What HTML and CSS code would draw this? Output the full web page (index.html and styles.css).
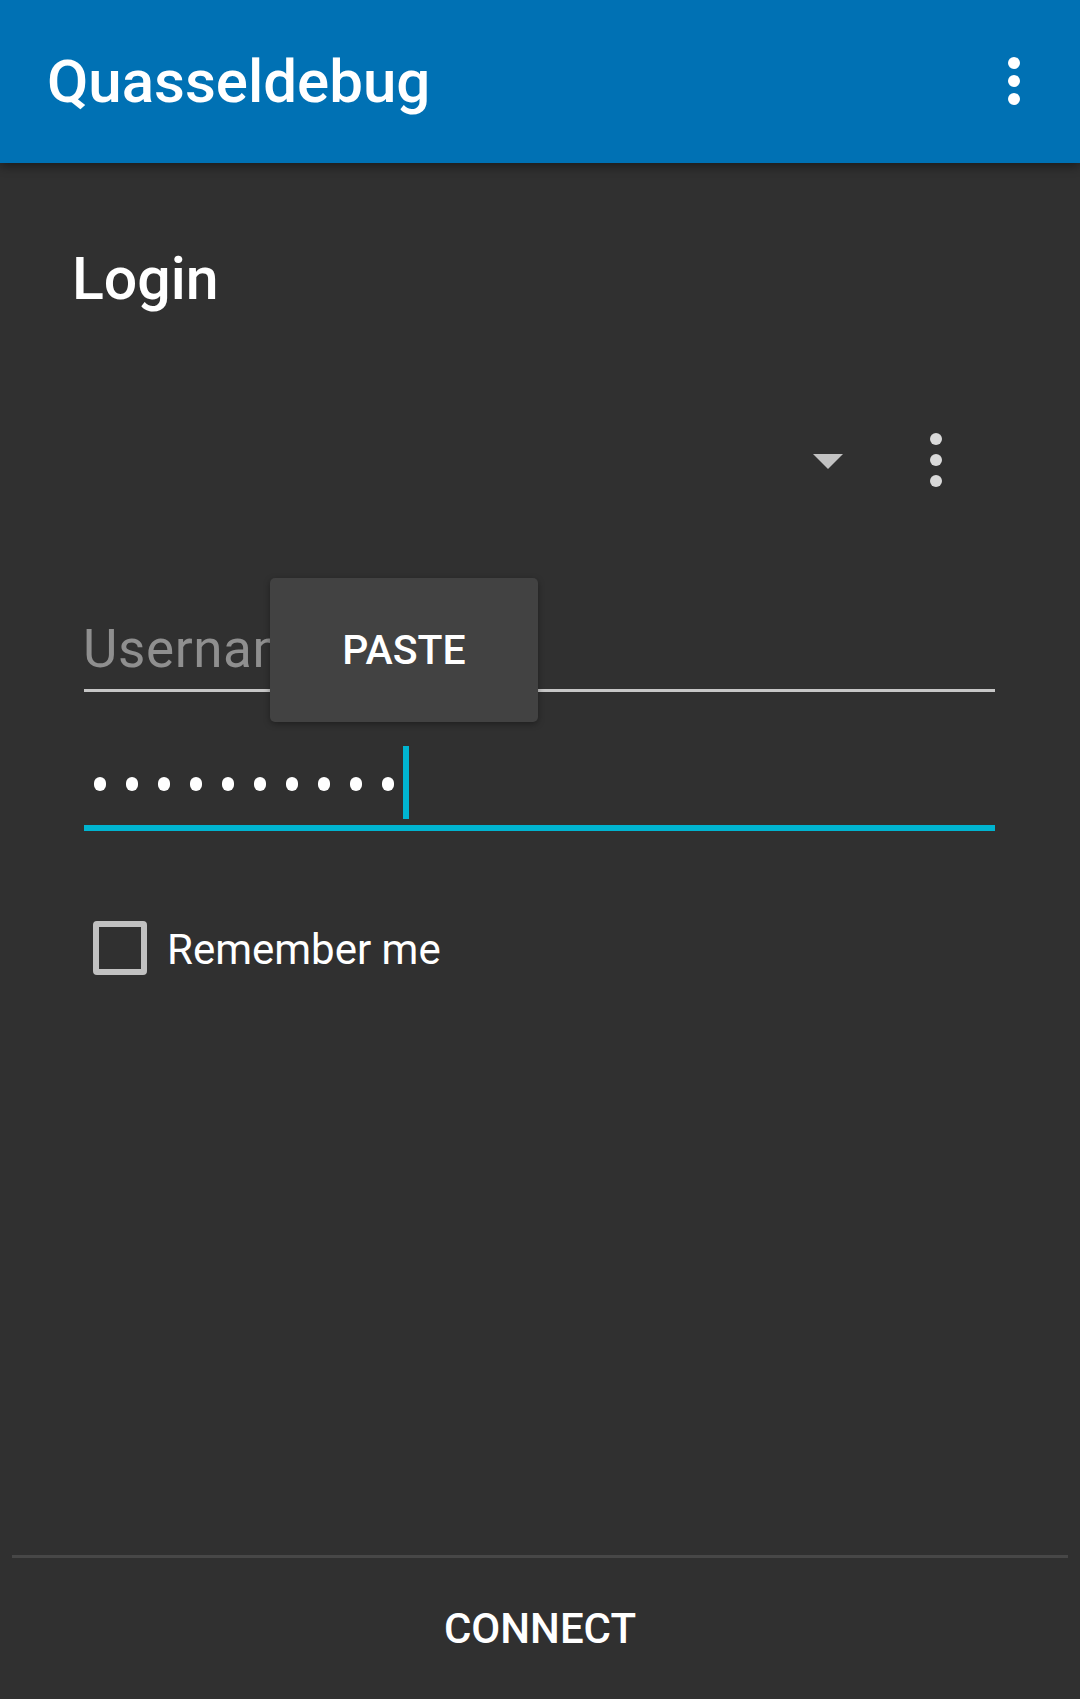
FILE: index.html
```html
<!DOCTYPE html>
<html>
<head>
<meta charset="utf-8">
<link rel="stylesheet" href="styles.css">
</head>
<body>
<div class="app">
  <header class="toolbar">
    <div class="title">Quasseldebug</div>
    <svg class="overflow" width="12" height="48" viewBox="0 0 12 48"><circle cx="6" cy="6" r="6" fill="#fff"/><circle cx="6" cy="24" r="6" fill="#fff"/><circle cx="6" cy="42" r="6" fill="#fff"/></svg>
  </header>
  <main class="content">
    <h1 class="heading">Login</h1>
    <div class="spinner-row">
      <svg class="arrow" width="30" height="15" viewBox="0 0 30 15"><polygon points="0,0 30,0 15,15" fill="#c2c2c2"/></svg>
      <svg class="menu" width="12" height="54" viewBox="0 0 12 54"><circle cx="6" cy="6" r="6" fill="#d9d9d9"/><circle cx="6" cy="27" r="6" fill="#d9d9d9"/><circle cx="6" cy="48" r="6" fill="#d9d9d9"/></svg>
    </div>
    <div class="field user">
      <span class="hint">Username</span>
      <div class="paste">PASTE</div>
    </div>
    <div class="field pass">
      <div class="dots">
        <span class="dot"></span><span class="dot"></span><span class="dot"></span><span class="dot"></span><span class="dot"></span><span class="dot"></span><span class="dot"></span><span class="dot"></span><span class="dot"></span><span class="dot last"></span>
      </div>
      <span class="cursor"></span>
    </div>
    <label class="check-row">
      <span class="box"></span>
      <span class="check-label">Remember me</span>
    </label>
  </main>
  <footer class="footer">
    <div class="connect">CONNECT</div>
  </footer>
</div>
</body>
</html>
```
FILE: styles.css
```css
html, body {
  margin: 0;
  padding: 0;
  background: #303030;
}
body {
  font-family: Roboto, "Noto Sans", "Liberation Sans", sans-serif;
  color: #fff;
}
.app {
  display: flex;
  flex-direction: column;
  height: 1699px;
  overflow: hidden;
}
.toolbar {
  height: 163px;
  flex: 0 0 163px;
  background: #0071b4;
  display: flex;
  align-items: center;
  padding: 0 60px 0 47px;
  box-shadow: 0 3px 10px rgba(0, 0, 0, 0.45);
  position: relative;
  z-index: 2;
}
.title {
  font-size: 60px;
  font-weight: 500;
  line-height: 60px;
}
.overflow {
  margin-left: auto;
  margin-top: -2px;
}
.content {
  flex: 1 1 auto;
  display: flex;
  flex-direction: column;
}
.heading {
  margin: 81px 0 0 72px;
  font-size: 59px;
  font-weight: 500;
  line-height: 70px;
}
.spinner-row {
  margin-top: 86px;
  height: 120px;
  display: flex;
  align-items: center;
  justify-content: flex-end;
  padding-right: 138px;
}
.arrow {
  margin-right: 87px;
  margin-top: 3px;
}
.field {
  margin-left: 84px;
  width: 911px;
}
.user {
  position: relative;
  margin-top: 99px;
  padding-bottom: 10px;
  border-bottom: 3px solid #c6c6c6;
}
.hint {
  display: block;
  font-size: 53px;
  line-height: 60px;
  letter-spacing: 0.6px;
  color: #8f8f8f;
  text-indent: -1px;
  font-weight: 400;
}
.paste {
  position: absolute;
  left: 186px;
  top: -41px;
  width: 268px;
  height: 144px;
  background: #424242;
  border-radius: 5px;
  box-shadow: 0 2px 6px rgba(0, 0, 0, 0.35);
  display: flex;
  align-items: center;
  justify-content: center;
  font-size: 41px;
  font-weight: 500;
  color: #fff;
}
.pass {
  margin-top: 54px;
  height: 73px;
  padding-bottom: 6px;
  border-bottom: 6px solid #00b4d0;
  display: flex;
  align-items: center;
  box-sizing: content-box;
}
.dots {
  display: flex;
  padding-left: 10px;
  margin-top: 3px;
}
.dot {
  width: 12px;
  height: 14px;
  border-radius: 6px;
  background: #fff;
  margin-right: 20px;
}
.dot.last {
  margin-right: 9px;
}
.cursor {
  width: 6px;
  height: 73px;
  background: #00b4d0;
}
.check-row {
  margin: 90px 0 0 93px;
  height: 54px;
  display: flex;
  align-items: center;
}
.box {
  width: 54px;
  height: 54px;
  box-sizing: border-box;
  border: 6px solid #c1c1c1;
  border-radius: 4px;
}
.check-label {
  margin-left: 20px;
  font-size: 42px;
  line-height: 54px;
  padding-top: 3px;
}
.footer {
  flex: 0 0 auto;
  margin: 0 12px;
  border-top: 3px solid #474747;
  height: 141px;
  display: flex;
  align-items: center;
  justify-content: center;
}
.connect {
  font-size: 42px;
  font-weight: 500;
  line-height: 48px;
}
```
